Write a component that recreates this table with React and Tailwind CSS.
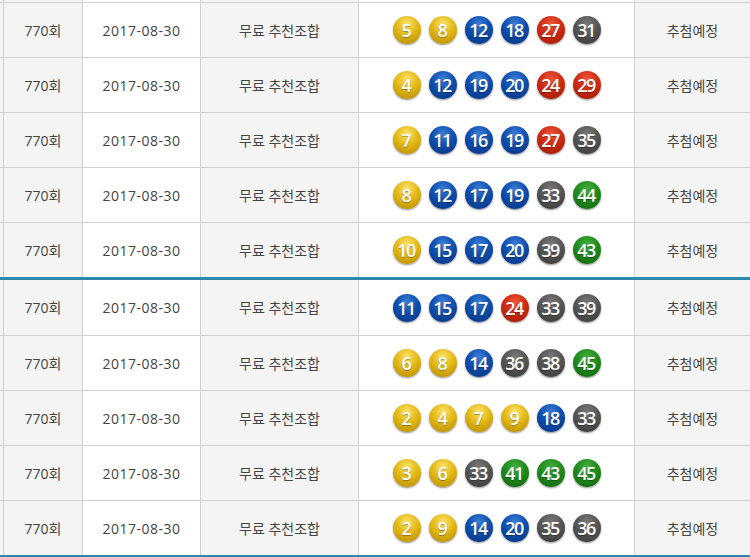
import React from "react";

const rows1 = [
  [5, 8, 12, 18, 27, 31],
  [4, 12, 19, 20, 24, 29],
  [7, 11, 16, 19, 27, 35],
  [8, 12, 17, 19, 33, 44],
  [10, 15, 17, 20, 39, 43],
];
const rows2 = [
  [11, 15, 17, 24, 33, 39],
  [6, 8, 14, 36, 38, 45],
  [2, 4, 7, 9, 18, 33],
  [3, 6, 33, 41, 43, 45],
  [2, 9, 14, 20, 35, 36],
];

function ballClass(n) {
  if (n <= 10)
    return "bg-[radial-gradient(circle_at_50%_28%,#fbe36a_0%,#e2b815_45%,#c99d08_75%,#a57e02_100%)]";
  if (n <= 20)
    return "bg-[radial-gradient(circle_at_50%_28%,#3b7ed8_0%,#0e4ead_45%,#0a3f93_75%,#06307a_100%)]";
  if (n <= 30)
    return "bg-[radial-gradient(circle_at_50%_28%,#f0553a_0%,#cd2b12_45%,#b3200a_75%,#8c1604_100%)]";
  if (n <= 40)
    return "bg-[radial-gradient(circle_at_50%_28%,#7a7a7a_0%,#555555_45%,#454545_75%,#2e2e2e_100%)]";
  return "bg-[radial-gradient(circle_at_50%_28%,#45ad3e_0%,#1f8a1c_45%,#177515_75%,#0e5a0c_100%)]";
}

function Ball({ n }) {
  return (
    <div
      className={
        "w-[28px] h-[28px] rounded-full flex items-center justify-center text-white text-[18px] font-semibold tracking-[-1.5px] leading-none shadow-[0_1px_2px_rgba(0,0,0,0.45)] [text-shadow:0_1px_1px_rgba(0,0,0,0.35)] " +
        ballClass(n)
      }
    >
      <span className="-ml-[1px]">{n}</span>
    </div>
  );
}

function Cells({ nums, h }) {
  return (
    <>
      <div className="w-[3px] bg-[#f4f4f4]" />
      <div className={"w-[79px] border-l border-[#d0d0d0] bg-[#f4f4f4] flex items-center justify-center " + h}>
        770회
      </div>
      <div className="w-[118px] border-l border-[#d0d0d0] bg-white flex items-center justify-center tracking-[0.5px]">
        2017-08-30
      </div>
      <div className="w-[158px] border-l border-[#d0d0d0] bg-[#f4f4f4] flex items-center justify-center">
        무료 추천조합
      </div>
      <div className="w-[276px] border-l border-[#d0d0d0] bg-white flex items-center justify-center gap-[8px]">
        {nums && nums.map((n, i) => <Ball key={i} n={n} />)}
      </div>
      <div className="flex-1 border-l border-[#d0d0d0] bg-[#f4f4f4] flex items-center justify-center">
        추첨예정
      </div>
    </>
  );
}

export default function App() {
  return (
    <div className="w-[750px] h-[557px] overflow-hidden bg-white text-[14px] text-[#444] font-['Open_Sans','Noto_Sans_CJK_KR',sans-serif]">
      {/* tail of the previous row */}
      <div className="flex h-[2px] overflow-hidden">
        <div className="w-[3px] bg-[#f4f4f4]" />
        <div className="w-[79px] border-l border-[#d0d0d0] bg-[#f4f4f4]" />
        <div className="w-[118px] border-l border-[#d0d0d0] bg-white" />
        <div className="w-[158px] border-l border-[#d0d0d0] bg-[#f4f4f4]" />
        <div className="w-[276px] border-l border-[#d0d0d0] bg-white" />
        <div className="flex-1 border-l border-[#d0d0d0] bg-[#f4f4f4]" />
      </div>
      <div className="border-t border-[#d0d0d0]">
        {rows1.map((nums, i) => (
          <div
            key={i}
            className={
              "flex " +
              (i === rows1.length - 1
                ? "border-b-[3px] border-[#2b8aab]"
                : "border-b border-[#d0d0d0]")
            }
          >
            <Cells nums={nums} h="h-[54px]" />
          </div>
        ))}
      </div>
      <div>
        {rows2.map((nums, i) => (
          <div
            key={i}
            className={
              "flex " +
              (i === rows2.length - 1
                ? "border-b-2 border-[#2b8aab]"
                : "border-b border-[#d0d0d0]")
            }
          >
            <Cells nums={nums} h={i === 0 ? "h-[55px]" : "h-[54px]"} />
          </div>
        ))}
      </div>
    </div>
  );
}
